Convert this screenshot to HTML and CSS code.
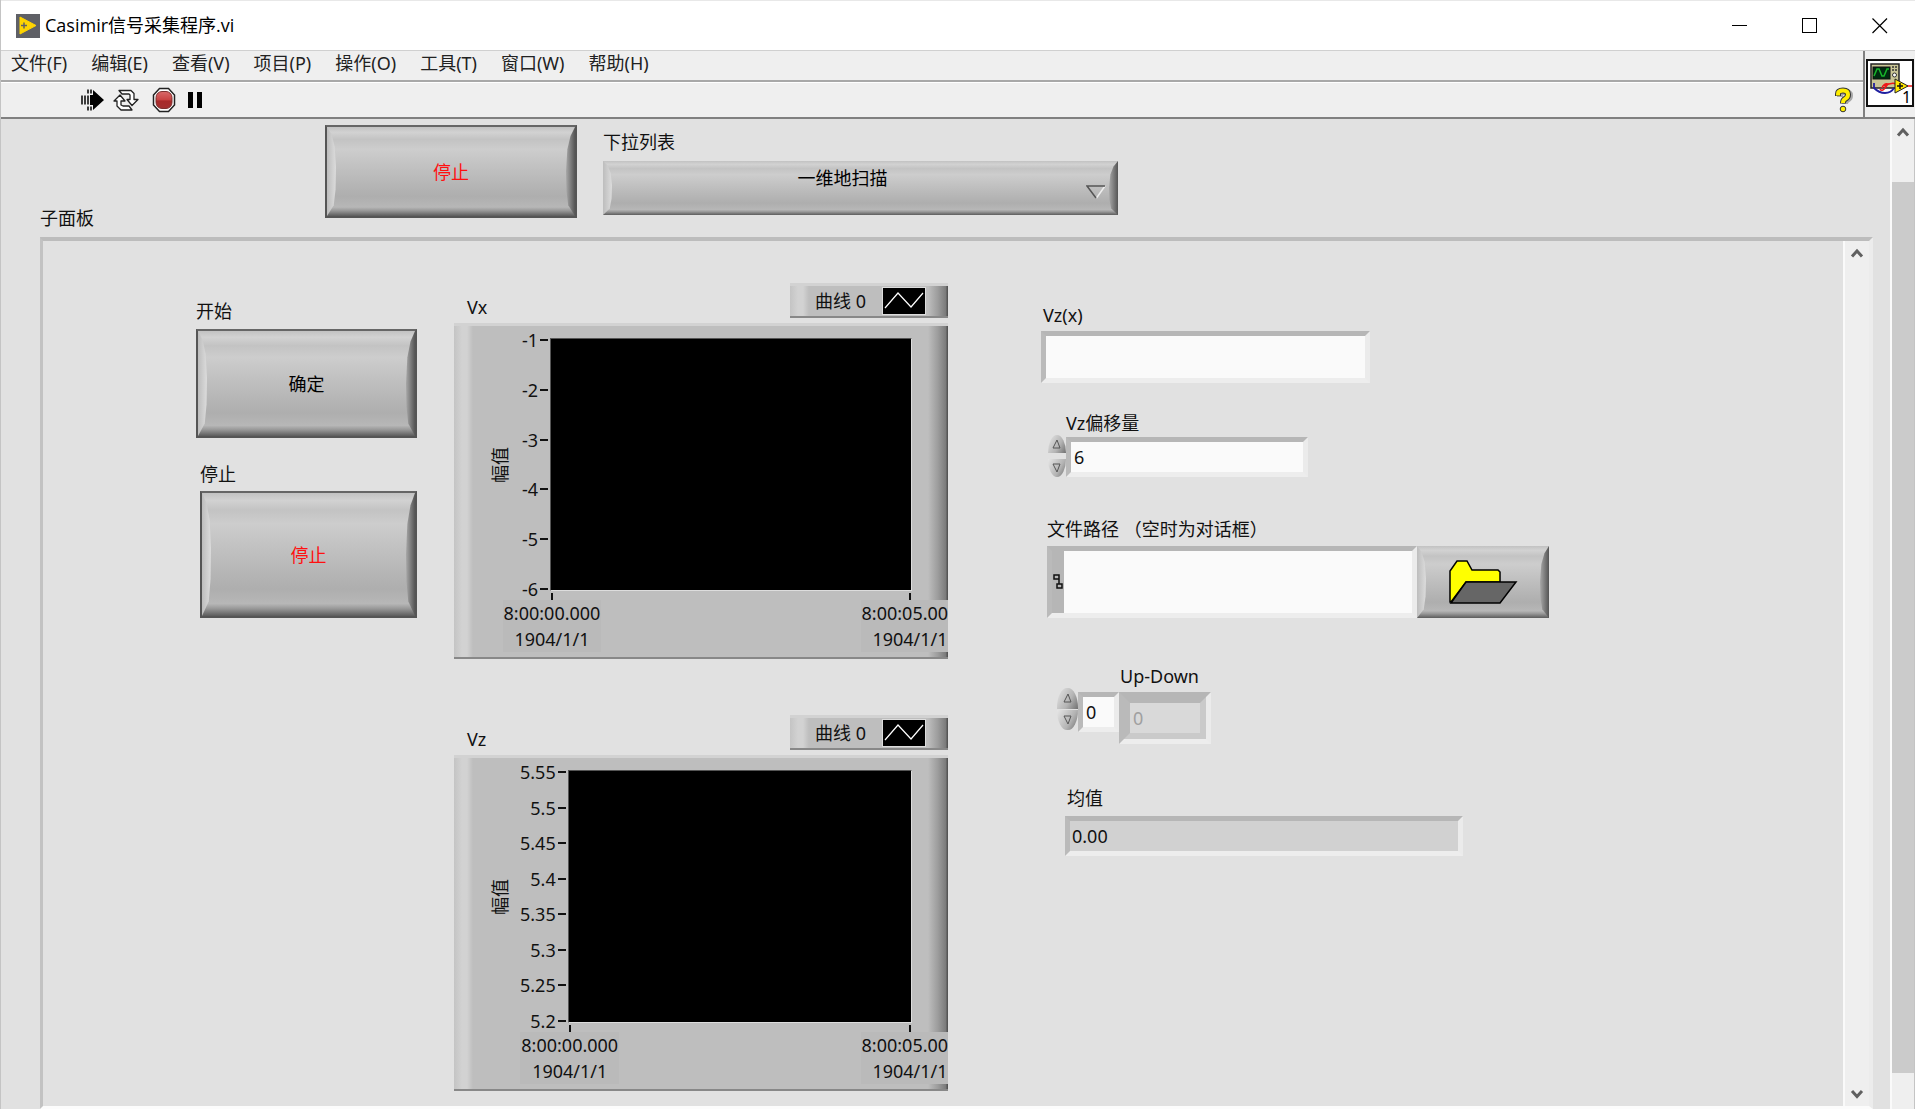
FILE: index.html
```html
<!DOCTYPE html>
<html lang="zh-CN">
<head>
<meta charset="utf-8">
<meta name="viewport" content="width=device-width, initial-scale=1">
<title>Casimir信号采集程序.vi</title>
<link rel="stylesheet" href="styles.css">
</head>
<body>
<div class="window">
  <header class="titlebar">
    <svg class="app-icon" width="24" height="24" viewBox="0 0 24 24" aria-hidden="true">
      <rect width="24" height="24" fill="#5f6066"/>
      <path d="M4 3 L20 11.500 L4 20 Z" fill="#ffd400" stroke="#ffd400" stroke-width="1" stroke-linejoin="round"/>
      <path d="M5 11.500h6M8 8.500v6" stroke="#5f6066" stroke-width="1.500"/>
    </svg>
    <h1 class="title">Casimir信号采集程序.vi</h1>
    <div class="window-buttons">
      <button class="window-button" type="button" aria-label="最小化"><svg width="16" height="16" viewBox="0 0 16 16"><path d="M0 7.500h15" stroke="#000"/></svg></button>
      <button class="window-button" type="button" aria-label="最大化"><svg width="16" height="16" viewBox="0 0 16 16"><rect x=".5" y=".5" width="14" height="14" fill="none" stroke="#000"/></svg></button>
      <button class="window-button" type="button" aria-label="关闭"><svg width="16" height="16" viewBox="0 0 16 16"><path d="M.5 .5l14.500 14.500M15 .5L.5 15" stroke="#000" stroke-width="1.200"/></svg></button>
    </div>
  </header>

  <div class="bars">
    <div class="bars-main">
      <nav class="menubar">
        <a href="#file">文件(F)</a>
        <a href="#edit">编辑(E)</a>
        <a href="#view">查看(V)</a>
        <a href="#project">项目(P)</a>
        <a href="#operate">操作(O)</a>
        <a href="#tools">工具(T)</a>
        <a href="#window">窗口(W)</a>
        <a href="#help">帮助(H)</a>
      </nav>
      <div class="toolbar">
        <button class="tool" type="button" aria-label="运行">
          <svg width="24" height="24" viewBox="0 0 24 24">
            <path d="M12 2l11 10-11 10v-5H9V7h3z" fill="#000"/>
            <path d="M1 7.500v9M4 7.500v9M7 7.500v9M7 1.500v4M10 1.500v4M7 18.500v4M10 18.500v4" stroke="#000" stroke-width="1.500"/>
          </svg>
        </button>
        <button class="tool" type="button" aria-label="连续运行">
          <svg width="26" height="24" viewBox="0 0 26 24">
            <g fill="#fff" stroke="#222" stroke-width="1.300" stroke-linejoin="round">
              <path d="M6 2.500h12l3 3v6h4l-6 6-5-6h3V7l-1-1H9z"/>
              <path d="M19 22H8l-4-4v-5H1l6-6 5 6H8v4l2 1h6z"/>
            </g>
          </svg>
        </button>
        <button class="tool tool-abort" type="button" aria-label="中止">
          <svg width="24" height="26" viewBox="0 0 24 26">
            <defs><linearGradient id="abort" x2="0" y2="1"><stop offset="0" stop-color="#d96a6a"/><stop offset=".5" stop-color="#c84242"/><stop offset=".55" stop-color="#a82a2a"/><stop offset="1" stop-color="#a43030"/></linearGradient></defs>
            <path d="M7.500 1.500h9l6 6.500v10l-6 6.500h-9L1.500 18V8z" fill="#fff" stroke="#222" stroke-width="1.500"/>
            <rect x="4" y="4.500" width="16" height="17" rx="6" fill="url(#abort)" stroke="#7d3030"/>
          </svg>
        </button>
        <button class="tool" type="button" aria-label="暂停">
          <svg width="16" height="16" viewBox="0 0 16 16"><path d="M0 0h5v16H0zM9 0h5v16h-5z" fill="#000"/></svg>
        </button>
        <button class="tool tool-help" type="button" aria-label="即时帮助">
          <svg width="20" height="26" viewBox="0 0 20 26">
            <g fill="none" stroke-linejoin="round">
              <path d="M5 9V7q0-3 5-3t5 3.500q0 3-3 4.500-2 1-2 4" stroke="#777" stroke-width="6" transform="translate(1 1)" opacity=".6"/>
              <path d="M4 9V7q0-3.500 5-3.500t5 4q0 3-3 4.500-2 1-2 4.500" stroke="#333" stroke-width="6"/>
              <path d="M4 8.500V7q0-3.500 5-3.500t5 4q0 3-3 4.500-2 1-2 4" stroke="#ffee00" stroke-width="4"/>
            </g>
            <circle cx="9" cy="22" r="2.800" fill="#ffee00" stroke="#333"/>
          </svg>
        </button>
      </div>
    </div>
    <div class="vi-slot">
      <svg width="48" height="48" viewBox="0 0 48 48" aria-label="VI 图标">
        <rect x="1" y="1" width="46" height="46" fill="#fff" stroke="#111" stroke-width="2"/>
        <rect x="5" y="5" width="28" height="24" fill="#c9c596" stroke="#222" stroke-width="1.500"/>
        <rect x="7" y="8" width="17" height="12" fill="#002b10" stroke="#111"/>
        <path d="M8 17l3-7h2l3 7h2l3-7h2" fill="none" stroke="#17b52a" stroke-width="1.500"/>
        <circle cx="28.500" cy="16" r="2" fill="#fff" stroke="#333"/>
        <path d="M26 8h5M26 11h5" stroke="#333" stroke-width="1.500" stroke-dasharray="2 1"/>
        <path d="M8 24v5q5 5 11 5t9-5" fill="none" stroke="#2020a0" stroke-width="1.800"/>
        <path d="M14 30q2 3 5-1t3-4q-4-1-6 4M18 27q8-4 12-2M40 27h6" fill="none" stroke="#f01818" stroke-width="1.500"/>
        <path d="M29 20l13 7-13 7z" fill="#ffe800" stroke="#222"/>
        <path d="M31 27h6M34 24v6" stroke="#111" stroke-width="1.500"/>
        <text class="vi-number" x="36" y="44">1</text>
      </svg>
    </div>
  </div>

  <div class="workspace">
    <main class="front-panel">
      <div class="control-row">
        <h2 class="caption subpanel-caption">子面板</h2>
        <button class="push push-main push-stop" type="button">停止</button>
        <div class="list-control">
          <label class="caption" for="mode">下拉列表</label>
          <div class="ring bevel">
            <select id="mode" class="ring-select"><option>一维地扫描</option></select>
            <svg class="ring-mark" width="20" height="14" viewBox="0 0 20 14" aria-hidden="true"><path d="M19 1L10.500 13" stroke="#eee" stroke-width="1.500"/><path d="M19 1H1l9 12" fill="none" stroke="#555" stroke-width="1.500"/></svg>
          </div>
        </div>
      </div>

      <section class="subpanel" aria-label="子面板">
        <div class="subpanel-body">
          <div class="actions">
            <div class="action">
              <span class="caption" id="start-label">开始</span>
              <button class="push push-start" type="button" aria-describedby="start-label">确定</button>
            </div>
            <div class="action action-stop">
              <span class="caption" id="stop-label">停止</span>
              <button class="push push-halt push-stop" type="button" aria-describedby="stop-label">停止</button>
            </div>
          </div>

          <div class="charts">
            <figure class="chart">
              <figcaption class="chart-head">
                <span class="caption chart-name">Vx</span>
                <span class="legend plate">曲线 0
                  <svg class="legend-line" width="42" height="26" viewBox="0 0 42 26" aria-hidden="true"><rect width="42" height="26" fill="#000"/><path d="M2 20L15 5 28 19 40 5" fill="none" stroke="#fff" stroke-width="1.200"/></svg>
                </span>
              </figcaption>
              <div class="graph plate">
                <span class="axis-name">幅值</span>
                <ol class="y-axis"><li>-1</li><li>-2</li><li>-3</li><li>-4</li><li>-5</li><li>-6</li></ol>
                <div class="plot"></div>
                <ol class="x-axis"><li><span>8:00:00.000<br>1904/1/1</span></li><li><span>8:00:05.000<br>1904/1/1</span></li></ol>
              </div>
            </figure>
            <figure class="chart">
              <figcaption class="chart-head">
                <span class="caption chart-name">Vz</span>
                <span class="legend plate">曲线 0
                  <svg class="legend-line" width="42" height="26" viewBox="0 0 42 26" aria-hidden="true"><rect width="42" height="26" fill="#000"/><path d="M2 20L15 5 28 19 40 5" fill="none" stroke="#fff" stroke-width="1.200"/></svg>
                </span>
              </figcaption>
              <div class="graph plate">
                <span class="axis-name">幅值</span>
                <ol class="y-axis"><li>5.55</li><li>5.5</li><li>5.45</li><li>5.4</li><li>5.35</li><li>5.3</li><li>5.25</li><li>5.2</li></ol>
                <div class="plot"></div>
                <ol class="x-axis"><li><span>8:00:00.000<br>1904/1/1</span></li><li><span>8:00:05.000<br>1904/1/1</span></li></ol>
              </div>
            </figure>
          </div>

          <form class="fields">
            <div class="field field-vzx">
              <label class="caption" for="vzx">Vz(x)</label>
              <input id="vzx" class="sunken" type="text">
            </div>
            <div class="field field-offset">
              <label class="caption" for="offset">Vz偏移量</label>
              <div class="numeric">
                <span class="spinner">
                  <button class="spin spin-up" type="button" aria-label="增加"><svg width="10" height="10" viewBox="0 0 10 10"><path d="M1 9L5 1l3 8z" fill="none" stroke="#555"/></svg></button>
                  <button class="spin spin-down" type="button" aria-label="减少"><svg width="10" height="10" viewBox="0 0 10 10"><path d="M1 1L5 9l3-8z" fill="none" stroke="#555"/></svg></button>
                </span>
                <input id="offset" class="sunken" type="text" value="6">
              </div>
            </div>
            <div class="field field-path">
              <label class="caption" for="path">文件路径 （空时为对话框）</label>
              <div class="path-control">
                <div class="path-box sunken">
                  <svg class="path-glyph" width="12" height="18" viewBox="0 0 12 18" aria-hidden="true"><path d="M2 2h5v4H2zM5 11h5v4H5zM7 6v5" fill="none" stroke="#111" stroke-width="1.500"/></svg>
                  <input id="path" class="path-input" type="text">
                </div>
                <button class="browse bevel" type="button" aria-label="浏览">
                  <svg width="70" height="46" viewBox="0 0 70 46"><path d="M2 43V12L9 2h10l5 9h26l2 2v10H18L3 43z" fill="#ff0" stroke="#000" stroke-width="1.500"/><path d="M18 23h50L52 44H3z" fill="#666" stroke="#000" stroke-width="1.500"/></svg>
                </button>
              </div>
            </div>
            <div class="field field-updown">
              <label class="caption" for="updown">Up-Down</label>
              <div class="numeric array">
                <span class="spinner joined">
                  <button class="spin spin-up" type="button" aria-label="增加索引"><svg width="10" height="10" viewBox="0 0 10 10"><path d="M1 9L5 1l3 8z" fill="none" stroke="#555"/></svg></button>
                  <button class="spin spin-down" type="button" aria-label="减少索引"><svg width="10" height="10" viewBox="0 0 10 10"><path d="M1 1L5 9l3-8z" fill="none" stroke="#555"/></svg></button>
                </span>
                <input class="sunken array-index" type="text" value="0" aria-label="索引">
                <span class="array-frame sunken"><input id="updown" class="array-value" type="text" value="0" disabled></span>
              </div>
            </div>
            <div class="field field-mean">
              <label class="caption" for="mean">均值</label>
              <input id="mean" class="sunken readout" type="text" value="0.00" readonly>
            </div>
          </form>
        </div>
        <div class="scroll scroll-inner" aria-hidden="true">
          <svg width="14" height="12" viewBox="0 0 14 12"><path d="M2 8.500L7 3l5 5.500" fill="none" stroke="#606060" stroke-width="3"/></svg>
          <svg width="14" height="12" viewBox="0 0 14 12"><path d="M2 3l5 5.500L12 3" fill="none" stroke="#606060" stroke-width="3"/></svg>
        </div>
      </section>
    </main>
    <div class="scroll scroll-outer" aria-hidden="true">
      <svg width="14" height="12" viewBox="0 0 14 12"><path d="M2 8.500L7 3l5 5.500" fill="none" stroke="#606060" stroke-width="3"/></svg>
      <div class="thumb"></div>
      <svg width="14" height="12" viewBox="0 0 14 12"><path d="M2 3l5 5.500L12 3" fill="none" stroke="#606060" stroke-width="3"/></svg>
    </div>
  </div>
</div>
</body>
</html>
```
FILE: styles.css
```css
* { box-sizing: border-box; }

body {
  margin: 0;
  overflow: hidden;
  color: #111;
  background: #e1e1e1;
  font: 18px/24px "Noto Sans", "Noto Sans CJK SC", sans-serif;
}

button, input, select { font: inherit; color: inherit; margin: 0; padding: 0; }
button { border: 0; background: none; display: flex; align-items: center; justify-content: center; }
svg { display: block; flex: none; }
ol { list-style: none; margin: 0; padding: 0; }
figure { margin: 0; }
h1, h2 { margin: 0; font: inherit; }

.window { display: flex; flex-direction: column; height: 100vh; border-left: 1px solid #c4c4c4; }

/* Title bar */
.titlebar {
  display: flex;
  flex: none;
  align-items: center;
  height: 50px;
  padding-left: 15px;
  gap: 5px;
  background: #fff;
  border-top: 1px solid #e8e8e8;
}
.title { flex: 1; font-family: "Open Sans", "Noto Sans CJK SC", sans-serif; line-height: 22px; padding-bottom: 2px; color: #000; }
.window-buttons { display: flex; }
.window-button { width: 70px; height: 48px; }

/* Menu and tool bars */
.bars { display: flex; flex: none; height: 69px; background: #efefef; border-top: 1px solid #d0d0d0; border-bottom: 2px solid #808080; }
.bars-main { flex: 1; display: flex; flex-direction: column; }
.menubar { display: flex; gap: 24px; height: 31px; padding: 0 10px; border-bottom: 2px solid #a8a8a8; }
.menubar a { color: #222; text-decoration: none; line-height: 24px; }
.toolbar { flex: 1; display: flex; align-items: center; gap: 8px; padding: 0 9px 0 80px; border-top: 1px solid #fff; }
.tool-abort { margin: 0 4px 0 5px; }
.tool-help { margin-left: auto; }
.vi-slot { width: 52px; display: flex; align-items: center; justify-content: center; padding-bottom: 2px; border-left: 2px solid #808080; }
.vi-number { font: 16px "Noto Sans", sans-serif; fill: #000; }

/* Front panel */
.workspace { flex: 1; display: flex; min-height: 0; }
.front-panel { flex: 1; display: flex; flex-direction: column; min-width: 0; padding: 6px 17px 0 39px; }
.caption { display: block; height: 24px; white-space: nowrap; }
.control-row { display: flex; height: 105px; flex: none; align-items: flex-start; }
.subpanel-caption { align-self: flex-end; width: 285px; }
.list-control { margin-left: 26px; padding-top: 5px; width: 515px; display: flex; flex-direction: column; gap: 7px; }

/* Moulded buttons: curved light edge on the left, dark one on the right */
.push, .bevel {
  position: relative;
  background: linear-gradient(#c2c2c2 0, #d2d2d2 6%, #c3c3c3 14%, #cdcdcd 25%, #c1c1c1 45%, #aeaeae 78%, #b7b7b7 90%, #989898 94%, #5c5c5c 100%);
}
.push { border: 2px solid #555; border-top-color: #666; color: #000; flex: none; }
.push::before, .bevel::before, .push::after, .bevel::after { content: ""; position: absolute; top: 0; bottom: 0; width: 9px; pointer-events: none; }
.push::before, .bevel::before {
  left: 0;
  background: linear-gradient(90deg, #bdbdbd, #dcdcdc);
  clip-path: polygon(0 0, 50% 8%, 85% 22%, 100% 45%, 95% 70%, 75% 88%, 0 100%);
}
.push::after, .bevel::after {
  right: 0;
  background: linear-gradient(90deg, #a8a8a8, #555);
  clip-path: polygon(100% 0, 50% 10%, 15% 25%, 0 50%, 5% 72%, 25% 88%, 100% 100%);
}
.push-main { width: 252px; height: 93px; }
.push-start { width: 221px; height: 109px; }
.push-halt { width: 217px; height: 127px; }
.push-stop { color: #ff1010; }

.ring { height: 54px; }
.ring-select { appearance: none; width: 100%; height: 100%; border: 0; padding: 0 36px 20px 0; background: transparent; text-align: center; text-align-last: center; color: #000; }
.ring-mark { position: absolute; right: 12px; bottom: 16px; }

/* Subpanel */
.subpanel {
  display: flex;
  flex: none;
  margin-top: 7px;
  border-style: solid;
  border-color: #bcbcbc #ececec #fcfcfc #c2c2c2;
  border-width: 4px 4px 3px 3px;
}
.subpanel-body { flex: 1; min-width: 0; display: flex; align-items: flex-start; padding: 42px 0 15px 153px; }
.actions { width: 221px; margin-top: 16px; display: flex; flex-direction: column; gap: 24px; }
.action { display: flex; flex-direction: column; gap: 6px; }
.action-stop { padding-left: 4px; gap: 5px; }

/* Charts */
.charts { width: 494px; margin-left: 37px; display: flex; flex-direction: column; gap: 56px; }
.chart { display: flex; flex-direction: column; gap: 5px; }
.chart-head { display: flex; justify-content: space-between; align-items: center; height: 35px; }
.chart-name { margin: 13px 0 0 13px; }
.plate {
  background:
    linear-gradient(90deg, #c4c4c4 0, #d2d2d2 8px, #d2d2d2 13px, transparent 19px),
    linear-gradient(270deg, #555 0, #555 1px, #7a7a7a 2px, #9c9c9c 10px, transparent 20px),
    #bebebe;
  border-top: 3px solid #d2d2d2;
  border-bottom: 2px solid #888;
}
.legend { display: flex; align-items: center; justify-content: flex-end; gap: 17px; width: 158px; height: 35px; padding-right: 23px; }
.legend-line { outline: 1px solid #ddd; }
.graph {
  display: grid;
  grid-template-columns: 24px auto 1fr;
  grid-template-rows: 253px 64px;
  height: 336px;
  padding: 12px 36px 0 34px;
  overflow: hidden;
}
.axis-name { justify-self: center; align-self: center; writing-mode: vertical-rl; text-orientation: sideways; transform: rotate(180deg); }
.y-axis { display: flex; flex-direction: column; justify-content: space-between; min-width: 38px; margin: -10px 0 -10px; padding-left: 8px; }
.y-axis li { display: flex; align-items: center; justify-content: flex-end; height: 24px; gap: 2px; }
.y-axis li::after { content: ""; width: 8px; height: 2px; margin-right: 2px; background: #111; }
.plot { background: #000; border: 1px solid; border-color: #555 #ddd #ddd #555; }
.x-axis { grid-column: 3; display: flex; justify-content: space-between; padding: 2px 1px 0; }
.x-axis li { width: 2px; display: flex; flex-direction: column; align-items: center; line-height: 26px; }
.x-axis li::before { content: ""; width: 2px; height: 7px; flex: none; background: #111; }
.x-axis span { padding: 0 1px; text-align: center; white-space: nowrap; background: #bababa; }

/* Inputs */
.fields { margin: 20px 0 0 93px; display: flex; flex-direction: column; }
.sunken { border: 5px solid; border-color: #b6b6b6 #ebebeb #ededed #bababa; background: #fafafa; border-radius: 0; outline: 0; }
.field { display: flex; flex-direction: column; align-items: flex-start; }
.field-vzx { gap: 4px; }
.field-vzx .caption { padding-left: 2px; }
.field-vzx input { width: 329px; height: 52px; }
.field-offset { margin-top: 28px; padding-left: 7px; }
.field-offset .caption { padding-left: 18px; }
.field-offset input { width: 242px; height: 40px; padding-left: 3px; }
.numeric { display: flex; align-items: flex-end; }
.spinner { display: flex; flex-direction: column; gap: 6px; width: 18px; height: 42px; }
.spin { flex: 1; width: 18px; background: linear-gradient(120deg, #e6e6e6, #b4b4b4 60%, #707070); }
.spin-up { border-radius: 9px 9px 0 0 / 18px 18px 0 0; }
.spin-down { border-radius: 0 0 9px 9px / 0 0 18px 18px; }
.joined { gap: 1px; width: 21px; }
.joined .spin { width: 21px; }
.joined .spin-up { border-radius: 10px 10px 0 0 / 20px 20px 0 0; }
.joined .spin-down { border-radius: 0 0 10px 10px / 0 0 20px 20px; }
.field-path { margin-top: 40px; padding-left: 6px; gap: 5px; }
.path-control { display: flex; }
.path-box { display: flex; align-items: center; width: 370px; height: 72px; background: #b6b6b6; }
.path-input { flex: 1; min-width: 0; height: 100%; border: 0; background: #fafafa; outline: 0; }
.browse { width: 132px; height: 72px; }
.field-updown { margin-top: 46px; padding-left: 16px; }
.field-updown .caption { padding-left: 63px; }
.array { align-items: flex-start; }
.array-index { width: 41px; height: 40px; margin-top: 4px; padding-left: 3px; }
.array-frame { width: 92px; height: 52px; margin-top: 4px; background: #d9d9d9; display: flex; }
.array-value { width: 100%; border: 6px solid; border-color: #b6b6b6 #cacaca #cacaca #bababa; padding-left: 3px; background: #d9d9d9; color: #a0a0a0; }
.field-mean { margin-top: 42px; padding-left: 24px; gap: 6px; }
.field-mean .caption { padding-left: 2px; }
.readout { width: 398px; height: 40px; padding-left: 2px; background: #d1d1d1; }

/* Scroll bars */
.scroll { display: flex; flex-direction: column; flex: none; align-items: center; background: #efefef; border-left: 2px solid #fafafa; }
.scroll-inner { width: 26px; justify-content: space-between; padding: 7px 0 6px; }
.scroll-outer { width: 25px; padding-top: 8px; border-right: 1px solid #c4c4c4; }
.thumb { flex: 1; width: 100%; margin: 43px 0 34px; background: #cbcbcb; }
.scroll-outer svg:last-child { margin-bottom: -10px; }
```
